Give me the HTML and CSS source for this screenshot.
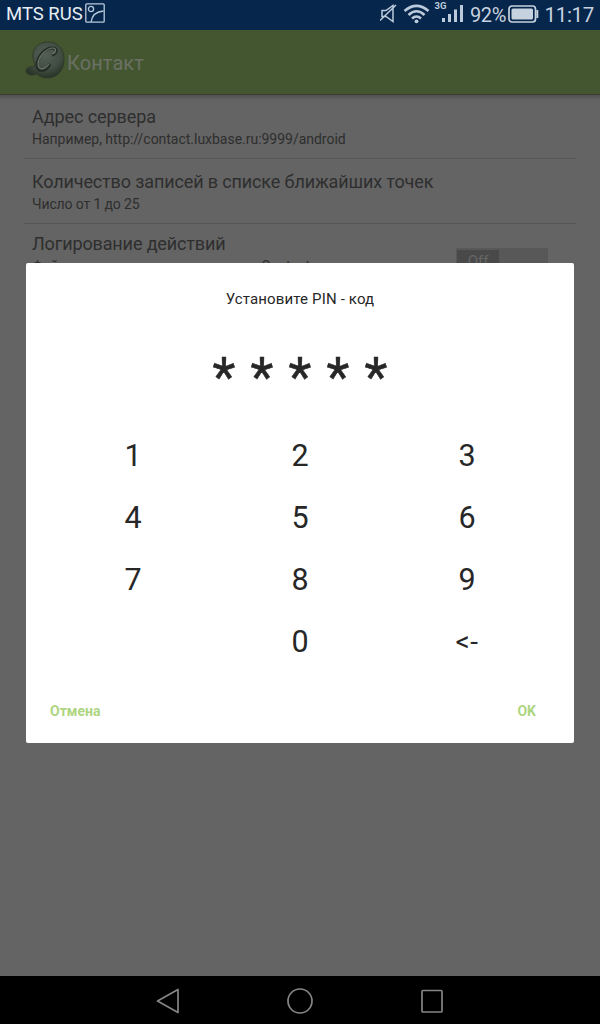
FILE: index.html
```html
<!DOCTYPE html>
<html lang="ru">
<head>
<meta charset="utf-8">
<title>Контакт</title>
<link rel="stylesheet" href="styles.css">
</head>
<body>
<div class="screen">
  <div class="status">
    <span class="carrier">MTS RUS</span>
    <svg class="shot" width="20" height="20" viewBox="0 0 20 20" fill="none" stroke="#b9cade" stroke-width="1.3"><rect x=".8" y=".8" width="18.4" height="18.4" rx="1"/><circle cx="6" cy="6" r="2.6"/><path d="M6 19C7 13 11 8.500 18.500 8"/></svg>
    <svg class="signals" width="86" height="30" viewBox="0 0 86 30" fill="none" stroke="#bccbdc">
      <path d="M2 10.500h4l7-5v16l-7-5H2zM0 20.500 16 5" stroke-width="1.500"/>
      <g stroke-width="2.600"><path d="M24.500 11Q36.500 .8 48.500 11M28.500 15Q36.500 7.500 44.500 15M32 18.500Q36.500 14.500 41 18.500"/></g>
      <circle cx="36.500" cy="21.300" r="1.900" fill="#bccbdc" stroke="none"/>
      <path d="M63.500 22v-4M69.500 22v-8M75.500 22V9.500M81.500 22V5" stroke-width="3"/>
      <text class="net" x="54.500" y="9">3G</text>
    </svg>
    <span class="percent">92%</span>
    <svg class="battery" width="31" height="18" viewBox="0 0 31 18" fill="none" stroke="#c6d2df"><rect x="1" y="1" width="26.500" height="16" rx="3" stroke-width="1.700"/><rect x="3.500" y="3.500" width="21.500" height="11" rx="1.500" fill="#c6d2df" stroke="none"/><path d="M29.300 5v8" stroke-width="2"/></svg>
    <span class="clock">11:17</span>
  </div>
  <div class="appbar">
    <svg class="logo" width="42" height="42" viewBox="0 0 42 42">
      <defs>
        <radialGradient id="metal" cx=".5" cy=".35" r=".65"><stop offset="0" stop-color="#535f54"/><stop offset=".65" stop-color="#414d42"/><stop offset="1" stop-color="#293327"/></radialGradient>
      </defs>
      <path d="M9 22C5 11 12 2 23 2c10 0 16 7 16 17 0 12-7 19-17 19-5 0-8-2-10-4-5 2-11 1-11-3 0-3 4-5 8-4 1-1 1-3 0-5z" fill="url(#metal)" stroke="#2f3c29" stroke-width="1"/>
      <path d="M27 15c5-1 6-7 1-7-8-1-16 9-16 17 0 8 9 7 13-1" fill="none" stroke="#252e26" stroke-width="3"/>
      <path d="M27 14c4-1 5-6 1-6-7 0-15 9-15 16 0 7 7 6 11 0" fill="none" stroke="#6b756c" stroke-width="1.200"/>
    </svg>
    <span class="title">Контакт</span>
  </div>
  <div class="settings">
    <div class="row"><div class="name">Адрес сервера</div><div class="hint">Например, http://contact.luxbase.ru:9999/android</div></div>
    <div class="row"><div class="name long">Количество записей в списке ближайших точек</div><div class="hint range">Число от 1 до 25</div></div>
    <div class="row last"><div><div class="name long">Логирование действий</div><div class="hint">Файл лога сохраняется в каталоге Contact</div></div><div class="switch"><span>Off</span></div></div>
  </div>
  <div class="nav">
    <svg width="24" height="28" viewBox="0 0 24 28" fill="none" stroke="#858585" stroke-width="1.700"><path d="M1.500 14 22 2.500v23z" stroke-linejoin="round"/></svg>
    <svg width="28" height="28" viewBox="0 0 28 28" fill="none" stroke="#858585" stroke-width="1.700"><circle cx="14" cy="14" r="12"/></svg>
    <svg width="24" height="28" viewBox="0 0 24 28" fill="none" stroke="#858585" stroke-width="1.700"><rect x="2" y="3.500" width="20" height="21.500" rx="1"/></svg>
  </div>
  <div class="dialog">
    <div class="prompt">Установите PIN - код</div>
    <div class="pin"><span>*</span><span>*</span><span>*</span><span>*</span><span>*</span></div>
    <div class="keys">
      <span>1</span><span>2</span><span>3</span>
      <span>4</span><span>5</span><span>6</span>
      <span>7</span><span>8</span><span>9</span>
      <span></span><span>0</span><span class="erase">&lt;-</span>
    </div>
    <div class="actions"><span>Отмена</span><span>OK</span></div>
  </div>
</div>
</body>
</html>
```
FILE: styles.css
```css
* { box-sizing: border-box; }
body { margin: 0; font-family: Roboto, "Noto Sans", sans-serif; }
.screen { position: relative; width: 600px; height: 1024px; overflow: hidden; display: flex; flex-direction: column; background: #646464; }
.status { height: 30px; flex: none; display: flex; align-items: center; padding: 0 6px; background: #06264b; color: #c6d2df; line-height: 30px; white-space: nowrap; }
.carrier { width: 80px; font-size: 18.5px; color: #e7edf3; padding-bottom: 2px; }
.shot { flex: none; margin: -4px 0 0; }
.signals { margin-left: 275px; flex: none; }
.net { font: bold 9.500px Roboto, sans-serif; fill: #bccbdc; stroke: none; }
.percent { width: 39px; margin-left: 4px; font-size: 20px; letter-spacing: -.4px; }
.battery { flex: none; margin-top: -3px; }
.clock { margin-left: 5px; font-size: 20.5px; letter-spacing: -.3px; }
.appbar { height: 65px; flex: none; display: flex; align-items: center; padding-left: 25px; background: #445630; border-bottom: 1px solid #383e32; }
.logo { margin-top: -2px; }
.title { padding-top: 2px; font-size: 20px; color: #6b7065; letter-spacing: .1px; }
.settings { flex: 1; padding: 0 24px; color: #2e2e2e; background: linear-gradient(#505050, #646464 5px); }
.row { height: 65px; padding: 11px 8px 0; border-bottom: 1px solid #575757; }
.row:first-child { height: 64px; padding-top: 10px; }
.row.last { height: 200px; padding-top: 8px; display: flex; justify-content: space-between; border: 0; }
.name { font-size: 18px; line-height: 23px; white-space: nowrap; letter-spacing: -.08px; }
.name.long { letter-spacing: -.13px; }
.hint { font-size: 14px; line-height: 22px; white-space: nowrap; letter-spacing: -.02px; }
.hint.range { letter-spacing: -.13px; }
.switch { width: 92px; height: 28px; margin: 16px 20px 0 0; background: #585858; padding: 2px 1px; }
.switch span { display: block; width: 42px; height: 24px; background: #494949; color: #666; font-size: 15px; line-height: 22px; text-align: center; }
.nav { height: 48px; flex: none; display: flex; align-items: center; justify-content: center; gap: 106px; padding-top: 2px; background: #000; }
.dialog { position: absolute; left: 26px; top: 263px; width: 548px; height: 480px; padding-top: 25px; background: #fff; border-radius: 2px; color: #272727; }
.prompt { text-align: center; font-size: 15px; line-height: 22px; letter-spacing: .15px; }
.pin { display: flex; justify-content: center; height: 115px; padding-top: 35px; font-size: 53px; line-height: 64px; }
.pin span { width: 38px; text-align: center; -webkit-text-stroke: .5px #272727; }
.keys { display: grid; grid-template-columns: repeat(3, 167px); grid-auto-rows: 62px; justify-content: center; text-align: center; font-size: 30.5px; line-height: 62px; }
.erase { font-size: 28px; letter-spacing: .5px; }
.actions { display: flex; justify-content: space-between; padding: 27px 38px 0 24px; font-size: 14px; font-weight: 700; line-height: 22px; color: #aed581; }
```
